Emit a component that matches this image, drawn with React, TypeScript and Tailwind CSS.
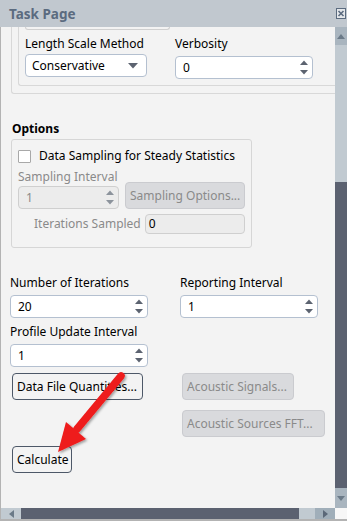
import React from 'react';

const font = { fontFamily: '"Noto Sans", "Liberation Sans", sans-serif' };

const Arrows = ({ disabled = false }: { disabled?: boolean }) => (
  <svg width="10" height="17" viewBox="0 0 10 17" className="shrink-0">
    <path d="M1 6 L5 1.5 L9 6 Z" fill={disabled ? '#8c939c' : '#5c6370'} />
    <path d="M1 11 L5 15.5 L9 11 Z" fill={disabled ? '#8c939c' : '#5c6370'} />
  </svg>
);

const Spinner = ({ value, w, disabled = false }: { value: string; w: string; disabled?: boolean }) => (
  <div
    className={`${w} h-[23px] flex items-center justify-between pl-[7px] pr-[3px] rounded-[4px] border ${
      disabled ? 'bg-[#ececec] border-[#cfcfcf] text-[#8a8a8a]' : 'bg-white border-[#b4c0d0] text-black'
    }`}
  >
    <span className="text-[12px] leading-[14px]">{value}</span>
    <Arrows disabled={disabled} />
  </div>
);

const GrayButton = ({ label, w }: { label: string; w: string }) => (
  <div className={`${w} h-[27px] flex items-center px-[4px] rounded-[4px] bg-[#d9dadd] border border-[#cacbcf] text-[#8a8a8a] text-[12px] leading-[14px] whitespace-nowrap`}>
    {label}
  </div>
);

const DarkButton = ({ label, w }: { label: string; w: string }) => (
  <div className={`${w} h-[27px] flex items-center px-[4px] rounded-[4px] bg-[#f3f3f3] border border-[#4d5868] text-black text-[12px] leading-[14px] whitespace-nowrap`}>
    {label}
  </div>
);

export default function App() {
  return (
    <div className="w-[347px] h-[521px] flex flex-col bg-[#f3f3f3] overflow-hidden relative select-none" style={font}>
      {/* title bar */}
      <div className="h-[27px] shrink-0 bg-[#c1c8cf] flex items-center justify-between pl-[9px] pr-[1px]">
        <span className="text-[13.5px] font-bold text-[#5b6b7f] leading-[16px]">Task Page</span>
        <svg width="10" height="11" viewBox="0 0 10 11" className="mb-[1px]">
          <rect x="0.5" y="0.5" width="9" height="10" fill="#e4e7ea" stroke="#5b6b7f" />
          <path d="M2.5 3 L7.5 8 M7.5 3 L2.5 8" stroke="#5b6b7f" strokeWidth="1.6" />
        </svg>
      </div>

      <div className="flex flex-1 min-h-0">
        {/* content */}
        <div className="flex-1 min-w-0 border-l border-[#b3b3b3] text-black text-[12px] leading-[14px] overflow-hidden">
          {/* cut-off group boxes */}
          <div className="ml-[10px] border-l border-b border-[#d8d8d8] rounded-bl-[3px] pb-[7px]">
            <div className="ml-[6px] border-l border-b border-[#d8d8d8] rounded-bl-[3px] pb-[6px]">
              <div className="ml-[6px] w-[145px] h-[3px] border-l border-r border-b border-[#d0d0d0] rounded-b-[3px] bg-[#f3f3f3]" />
              <div className="flex mt-[7px] pl-[6px]">
                <div className="w-[150px]">
                  <div>Length Scale Method</div>
                  <div className="mt-[3px] w-[122px] h-[23px] flex items-center justify-between pl-[6px] pr-[8px] rounded-[4px] bg-white border border-[#b4c0d0]">
                    <span>Conservative</span>
                    <svg width="10" height="6" viewBox="0 0 10 6">
                      <path d="M0 0 L10 0 L5 5.5 Z" fill="#5c6370" />
                    </svg>
                  </div>
                </div>
                <div>
                  <div>Verbosity</div>
                  <div className="mt-[5px]">
                    <Spinner value="0" w="w-[138px]" />
                  </div>
                </div>
              </div>
            </div>
          </div>

          {/* Options */}
          <div className="ml-[11px] mt-[28px] font-bold">Options</div>
          <div className="ml-[10px] mt-[3px] w-[241px] h-[109px] border border-[#d6d6d6] rounded-[3px] pl-[6px] pt-[9px]">
            <div className="flex items-center gap-[8px]">
              <div className="w-[13px] h-[13px] bg-white border border-[#a8a8a8] rounded-[1px]" />
              <span>Data Sampling for Steady Statistics</span>
            </div>
            <div className="mt-[7px] text-[#8a8a8a]">Sampling Interval</div>
            <div className="flex items-end gap-[6px] -mt-[2px]">
              <Spinner value="1" w="w-[101px]" disabled />
              <GrayButton label="Sampling Options..." w="w-[120px]" />
            </div>
            <div className="flex items-center mt-[5px] pl-[16px]">
              <span className="text-[#8a8a8a]">Iterations Sampled</span>
              <div className="ml-[4px] w-[100px] h-[20px] flex items-center pl-[3px] bg-[#ececec] border border-[#cfcfcf] rounded-[4px]">0</div>
            </div>
          </div>

          {/* iterations */}
          <div className="flex mt-[28px] pl-[9px]">
            <div className="w-[170px]">
              <div>Number of Iterations</div>
              <div className="mt-[5px]">
                <Spinner value="20" w="w-[138px]" />
              </div>
            </div>
            <div>
              <div>Reporting Interval</div>
              <div className="mt-[5px]">
                <Spinner value="1" w="w-[138px]" />
              </div>
            </div>
          </div>
          <div className="pl-[9px] mt-[7px]">
            <div>Profile Update Interval</div>
            <div className="mt-[5px]">
              <Spinner value="1" w="w-[138px]" />
            </div>
          </div>

          <div className="flex mt-[6px] pl-[11px]">
            <div className="w-[170px]">
              <DarkButton label="Data File Quantities..." w="w-[131px]" />
            </div>
            <div className="flex flex-col gap-[10px]">
              <GrayButton label="Acoustic Signals..." w="w-[112px]" />
              <GrayButton label="Acoustic Sources FFT..." w="w-[143px]" />
            </div>
          </div>
          <div className="pl-[11px] mt-[9px]">
            <DarkButton label="Calculate" w="w-[60px]" />
          </div>
        </div>

        {/* vertical scrollbar */}
        <div className="w-[12px] shrink-0 flex flex-col bg-[#c1cad1]">
          <div className="h-[18px] flex items-center justify-center bg-[#a9b5bf]">
            <svg width="8" height="5" viewBox="0 0 8 5">
              <path d="M0 5 L4 0 L8 5 Z" fill="#6b7a88" />
            </svg>
          </div>
          <div className="h-[137px]" />
          <div className="flex-1 bg-[#5b6170]" />
          <div className="h-[20px] flex items-center justify-center bg-[#a9b5bf]">
            <svg width="8" height="5" viewBox="0 0 8 5">
              <path d="M0 0 L8 0 L4 5 Z" fill="#6b7a88" />
            </svg>
          </div>
        </div>
      </div>

      {/* horizontal scrollbar */}
      <div className="h-[13px] shrink-0 flex border-b-[2px] border-[#b3b3b3]">
        <div className="flex flex-1 bg-[#c1cad1] border-l border-[#b3b3b3]">
          <div className="w-[20px] flex items-center justify-center">
            <svg width="5" height="8" viewBox="0 0 5 8">
              <path d="M5 0 L0 4 L5 8 Z" fill="#6b7a88" />
            </svg>
          </div>
          <div className="w-[278px] bg-[#5b6170]" />
          <div className="flex-1" />
          <div className="w-[20px] flex items-center justify-center bg-[#a0aeb9]">
            <svg width="5" height="8" viewBox="0 0 5 8">
              <path d="M0 0 L5 4 L0 8 Z" fill="#5b6878" />
            </svg>
          </div>
        </div>
        <div className="w-[12px] bg-[#f7f7f7]" />
      </div>

      {/* red annotation arrow */}
      <svg className="absolute left-0 top-0 pointer-events-none" width="347" height="521" viewBox="0 0 347 521">
        <defs>
          <filter id="sh" x="-20%" y="-20%" width="140%" height="140%">
            <feDropShadow dx="1.5" dy="1.5" stdDeviation="1.2" floodColor="#000" floodOpacity="0.35" />
          </filter>
        </defs>
        <g filter="url(#sh)">
          <line x1="121" y1="376" x2="77" y2="429" stroke="#ee1b1b" strokeWidth="7.5" strokeLinecap="round" />
          <path d="M58 452 L66 422 L86 439 Z" fill="#ee1b1b" />
        </g>
      </svg>
    </div>
  );
}
